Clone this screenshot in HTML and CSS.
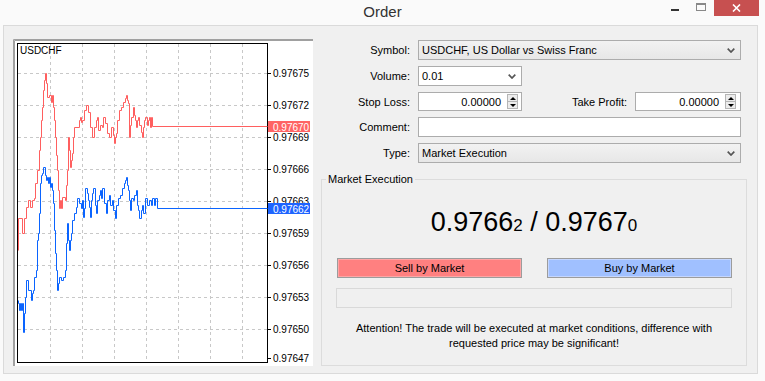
FILE: index.html
```html
<!DOCTYPE html>
<html lang="en">
<head>
    <meta charset="UTF-8">
    <title>Order</title>
    <link rel="stylesheet" href="styles.css">
</head>
<body>

    <div class="titlebar">
        <div class="title">Order</div>
        <div class="winbtns">
            <div class="wb"><span class="wb-min"></span></div>
            <div class="wb"><span class="wb-max"></span></div>
            <div class="wb wb-close">
                <svg width="9" height="8" viewBox="0 0 9 8"><path d="M1 0.5 L8 7.5 M8 0.5 L1 7.5" stroke="#fff" stroke-width="1.6"/></svg>
            </div>
        </div>
    </div>

    <div class="panel">
        <div class="chart">
            <svg width="300" height="327" viewBox="13 39 300 327">
                <rect x="13" y="39" width="300" height="327" fill="#fff"/>
                <path d="M13.5 366 V39.5 H313 M14.5 366 V40.5 H313" stroke="#a0a0a0" fill="none"/>
                <g stroke="#c8c8c8" stroke-dasharray="3 3" fill="none">
                    <path d="M18 73.5 H267 M18 105.5 H267 M18 137.5 H267 M18 169.5 H267 M18 201.5 H267 M18 233.5 H267 M18 265.5 H267 M18 297.5 H267 M18 329.5 H267"/>
                    <path d="M50.5 44 V362 M82.5 44 V362 M114.5 44 V362 M146.5 44 V362 M178.5 44 V362 M210.5 44 V362 M242.5 44 V362"/>
                </g>
                <rect x="17.5" y="43.5" width="250" height="319" fill="none" stroke="#000"/>
                <path d="M268 73.5 H271 M268 105.5 H271 M268 137.5 H271 M268 169.5 H271 M268 201.5 H271 M268 233.5 H271 M268 265.5 H271 M268 297.5 H271 M268 329.5 H271 M268 358.5 H271" stroke="#000"/>
                <text x="20" y="54" class="sym">USDCHF</text>
                <g class="scale">
                    <text x="273" y="77">0.97675</text>
                    <text x="273" y="109">0.97672</text>
                    <text x="273" y="141">0.97669</text>
                    <text x="273" y="173">0.97666</text>
                    <text x="273" y="205">0.97663</text>
                    <text x="273" y="237">0.97659</text>
                    <text x="273" y="269">0.97656</text>
                    <text x="273" y="301">0.97653</text>
                    <text x="273" y="333">0.97650</text>
                    <text x="273" y="362">0.97647</text>
                </g>
                <g fill="none" stroke-width="1" transform="translate(0.5 0.5)">
                    <path stroke="#ff5f5f" d="M18 250 V218 H22 V233 H24 V218 H26 V207 H28 V200 H30 V207 H32 V200 H34 V198 H35 V183 H37 V170 H39 V150 H40 V137 H41 V120 H42 V107 H43 V90 H44 V80 H45 V73 H46 V83 H47 V97 H49 V95 H51 V102 H52 V95 H53 V107 H54 V120 H55 V137 H56 V155 H57 V170 H58 V190 H59 V208 H60 V200 H61 V208 H62 V197 H65 V200 H66 V185 H67 V170 H68 V137 H69 V150 H70 V167 H71 V160 H72 V153 H73 V137 H74 V127 H79 V120 H80 V117 H81 V122 H82 V120 H84 V110 H86 V105 H88 V112 H90 V127 H92 V137 H94 V127 H96 V120 H97 V117 H98 V130 H100 V125 H102 V127 H103 V117 H105 V123 H107 V133 H109 V137 H111 V127 H113 V135 H114 V143 H115 V137 H116 V133 H117 V120 H119 V110 H121 V107 H123 V102 H125 V98 H126 V95 H127 V100 H128 V103 H129 V137 H130 V125 H131 V117 H133 V107 H134 V115 H135 V120 H136 V127 H137 V120 H138 V117 H139 V125 H141 V132 H142 V137 H143 V127 H144 V120 H145 V117 H147 V125 H148 V120 H149 V117 H150 V127 H151 V117 H152 V126 H267"/>
                    <path stroke="#0a64ff" d="M18 300 V303 H19 V310 H20 V303 H21 V310 H22 V303 H23 V332 H24 V313 H25 V297 H26 V280 H28 V290 H31 V300 H32 V293 H33 V290 H34 V277 H36 V270 H37 V240 H38 V233 H39 V213 H40 V183 H41 V175 H42 V173 H43 V167 H45 V175 H46 V180 H47 V177 H48 V183 H49 V177 H50 V187 H51 V183 H52 V190 H53 V203 H54 V230 H55 V253 H56 V270 H57 V290 H58 V283 H59 V277 H61 V280 H63 V277 H65 V270 H66 V243 H67 V223 H68 V240 H69 V250 H70 V240 H71 V233 H72 V220 H74 V213 H76 V207 H77 V198 H79 V203 H81 V208 H82 V200 H83 V217 H84 V208 H85 V188 H87 V193 H88 V200 H89 V207 H90 V217 H91 V200 H92 V193 H93 V188 H95 V205 H96 V213 H97 V200 H99 V195 H100 V190 H101 V198 H102 V188 H104 V203 H106 V213 H107 V200 H109 V195 H110 V205 H112 V200 H113 V210 H115 V218 H116 V205 H118 V198 H120 V195 H122 V188 H124 V183 H125 V180 H126 V177 H127 V185 H128 V190 H129 V200 H130 V210 H131 V198 H133 V200 H134 V195 H136 V190 H137 V205 H138 V210 H139 V218 H141 V210 H142 V205 H143 V213 H145 V198 H147 V205 H149 V200 H151 V205 H152 V198 H154 V205 H155 V198 H157 V208 H267"/>
                </g>
                <rect x="268" y="121" width="42" height="11" fill="#ff6464"/>
                <text x="273" y="130.5" class="tag">0.97670</text>
                <rect x="268" y="203" width="42" height="11" fill="#1e64ff"/>
                <text x="273" y="212.5" class="tag">0.97662</text>
            </svg>
        </div>

        <div class="order">
            <div class="fields">
                <label>Symbol:</label>
                <div class="sel">
                    <span>USDCHF, US Dollar vs Swiss Franc</span>
                    <svg class="chev" width="8" height="5" viewBox="0 0 8 5"><path d="M0.7 0.7 L4 4 L7.3 0.7" stroke="#555" stroke-width="1.7" fill="none"/></svg>
                </div>

                <label>Volume:</label>
                <div class="sel combo">
                    <span>0.01</span>
                    <svg class="chev" width="8" height="5" viewBox="0 0 8 5"><path d="M0.7 0.7 L4 4 L7.3 0.7" stroke="#555" stroke-width="1.7" fill="none"/></svg>
                </div>

                <label>Stop Loss:</label>
                <div class="pair">
                    <div class="num">
                        <span>0.00000</span>
                        <div class="spin"><span class="up"></span><span class="down"></span></div>
                    </div>
                    <label class="tp">Take Profit:</label>
                    <div class="num num-wide">
                        <span>0.00000</span>
                        <div class="spin"><span class="up"></span><span class="down"></span></div>
                    </div>
                </div>

                <label>Comment:</label>
                <div class="text"></div>

                <label>Type:</label>
                <div class="sel">
                    <span>Market Execution</span>
                    <svg class="chev" width="8" height="5" viewBox="0 0 8 5"><path d="M0.7 0.7 L4 4 L7.3 0.7" stroke="#555" stroke-width="1.7" fill="none"/></svg>
                </div>
            </div>

            <fieldset class="market">
                <legend>Market Execution</legend>
                <div class="quote">0.9766<small>2</small> / 0.9767<small>0</small></div>
                <div class="trade">
                    <button class="sell">Sell by Market</button>
                    <button class="buy">Buy by Market</button>
                </div>
                <div class="status"></div>
                <p class="note">Attention! The trade will be executed at market conditions, difference with<br>requested price may be significant!</p>
            </fieldset>
        </div>
    </div>

</body>
</html>
```

FILE: styles.css
```css
body {
    margin: 0;
    width: 765px;
    height: 381px;
    overflow: hidden;
    background: #fafafa;
    font-family: "Liberation Sans", Arial, sans-serif;
    font-size: 11px;
    color: #000;
}

/* window caption */
.titlebar {
    height: 25px;
    display: grid;
    grid-template-columns: 1fr auto 1fr;
}
.title {
    grid-column: 2;
    font-size: 15px;
    line-height: 23px;
    color: #333;
}
.winbtns {
    justify-self: end;
    display: flex;
    margin-right: 6px;
}
.wb {
    width: 26px;
    height: 16px;
    display: flex;
    justify-content: center;
}
.wb-min {
    width: 8px;
    height: 2px;
    margin-top: 9px;
    background: #333;
}
.wb-max {
    width: 8px;
    height: 5px;
    margin-top: 3px;
    border: 1px solid #888;
    border-top-width: 2px;
}
.wb-close {
    width: 45px;
    background: #c75050;
    align-items: center;
}

/* dialog body */
.panel {
    margin-left: 3px;
    width: 755px;
    height: 349px;
    box-sizing: border-box;
    border: 1px solid #dadada;
    background: #f0f0f0;
    padding: 13px 10px 7px 9px;
    display: flex;
    gap: 8px;
}
.chart {
    width: 300px;
    height: 327px;
    flex: none;
}
.chart svg {
    display: block;
}
.sym {
    font-size: 10px;
}
.scale text {
    font-size: 10px;
}
.tag {
    font-size: 10px;
    fill: #fff;
}

.order {
    flex: 1;
    display: flex;
    flex-direction: column;
}
.fields {
    display: grid;
    grid-template-columns: 89px 323px;
    grid-template-rows: 20px 20px 19px 20px 20px;
    column-gap: 8px;
    row-gap: 6px;
    margin-top: 1px;
}
.fields label {
    text-align: right;
    align-self: center;
}
.sel, .num, .text {
    box-sizing: border-box;
    border: 1px solid #acacac;
    display: flex;
    align-items: center;
}
.sel {
    justify-content: space-between;
    padding: 0 5px 0 3px;
    background: linear-gradient(#f2f2f2, #e7e7e7);
}
.combo {
    width: 104px;
    background: #fff;
}
.text {
    background: #fff;
}
.pair {
    display: flex;
    align-items: stretch;
}
.fields .tp {
    flex: 1;
    margin-right: 8px;
}
.num {
    width: 104px;
    background: #fff;
    justify-content: flex-end;
    padding-right: 3px;
}
.num-wide {
    width: 106px;
    padding-right: 4px;
}
.spin {
    width: 11px;
    height: 15px;
    margin-left: 6px;
    box-sizing: border-box;
    border: 1px solid #b5b5b5;
    background: #ececec;
    display: flex;
    flex-direction: column;
}
.spin span {
    flex: 1;
    display: flex;
    justify-content: center;
    align-items: center;
}
.spin .up {
    border-bottom: 1px solid #b5b5b5;
}
.spin .up::before {
    content: "";
    border: 3px solid transparent;
    border-top: 0;
    border-bottom: 3px solid #000;
}
.spin .down::before {
    content: "";
    border: 3px solid transparent;
    border-bottom: 0;
    border-top: 3px solid #000;
}

/* market execution group */
.market {
    flex: 1;
    margin: 9px 0 0;
    padding: 0;
    border: 1px solid #dcdcdc;
}
.market legend {
    margin-left: 4px;
    padding: 0 2px;
    line-height: 14px;
}
.quote {
    margin-top: 20px;
    text-align: center;
    font-size: 27px;
    line-height: 32px;
}
.quote small {
    font-size: 17px;
}
.trade {
    display: flex;
    justify-content: space-between;
    margin: 16px 14px 0 15px;
}
.trade button {
    width: 185px;
    height: 20px;
    padding: 0;
    font-family: inherit;
    font-size: 11px;
    color: #000;
    border: 1px solid #9c9c9c;
}
.sell {
    background: #ff8080;
    box-shadow: inset 0 0 0 1px #ffa4a4;
}
.buy {
    background: #a0c0ff;
    box-shadow: inset 0 0 0 1px #c4d6ff;
}
.status {
    height: 20px;
    box-sizing: border-box;
    margin: 10px 14px 0 14px;
    border: 1px solid #d9d9d9;
}
.note {
    margin: 13px 0 0;
    text-align: center;
    line-height: 15px;
}
```
